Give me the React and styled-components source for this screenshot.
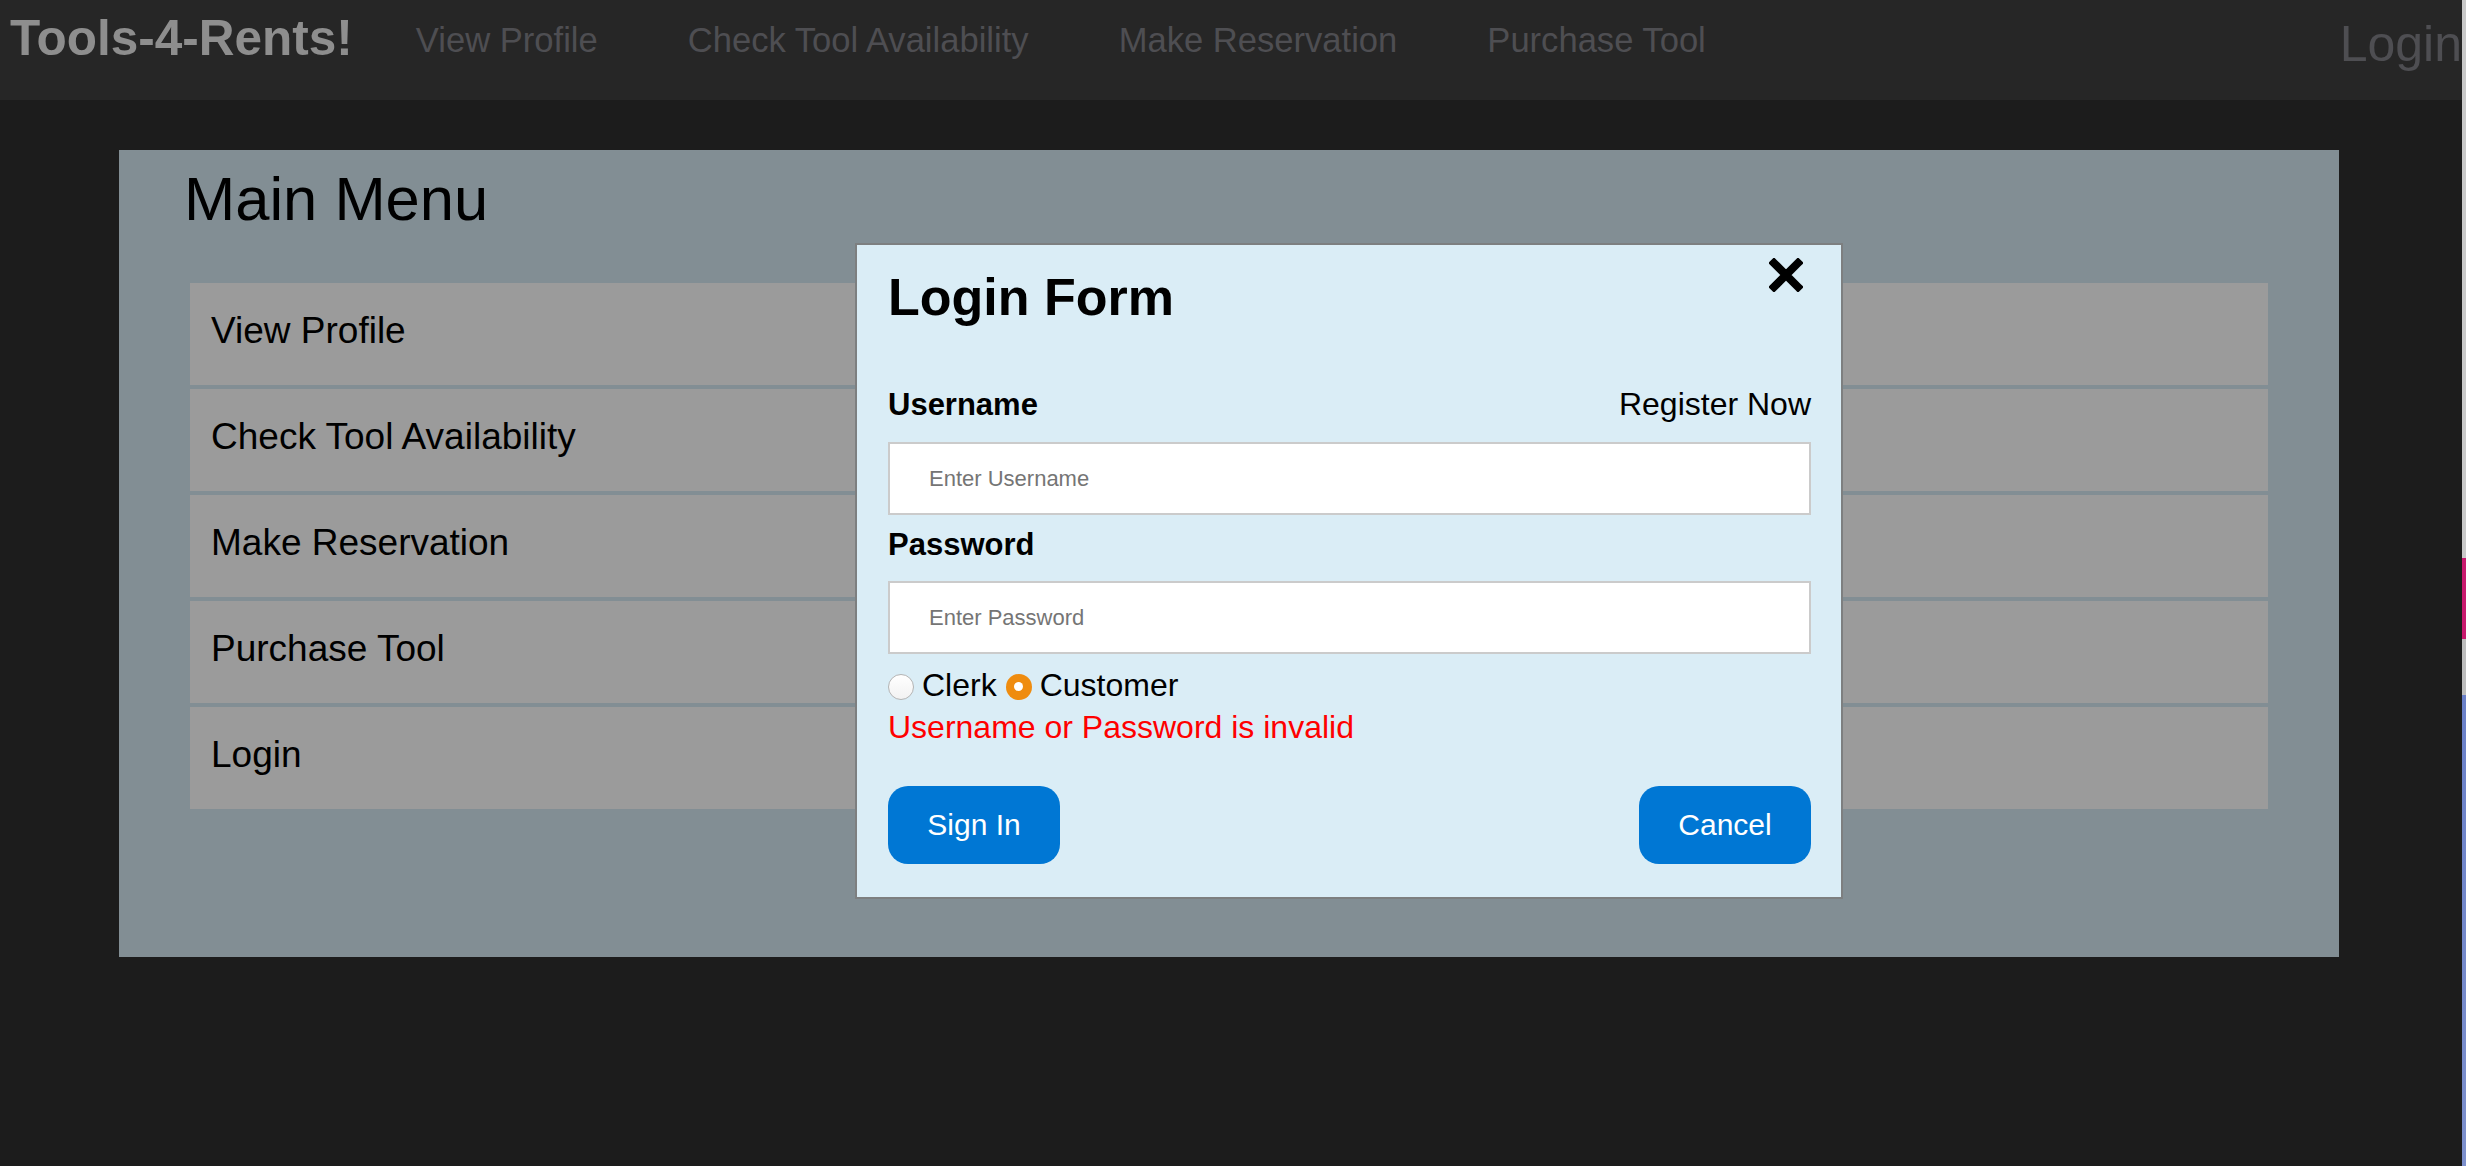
import React from 'react';
import styled, { createGlobalStyle } from 'styled-components';

const GlobalStyle = createGlobalStyle`
  html, body {
    margin: 0;
    padding: 0;
    background: #1c1c1c;
    font-family: "Liberation Sans", Helvetica, Arial, sans-serif;
    overflow: hidden;
  }
`;

const Shell = styled.div`
  display: flex;
  height: 1166px;
  overflow: hidden;
`;

const Page = styled.div`
  flex: 1;
  position: relative;
  min-width: 0;
`;

const EdgeStrip = styled.div`
  width: 4px;
  flex-shrink: 0;
  background: linear-gradient(
    to bottom,
    #c9c9c9 0px,
    #c9c9c9 558px,
    #c8196e 558px,
    #c8196e 639px,
    #bdbdbd 639px,
    #bdbdbd 695px,
    #6a80c8 695px,
    #7d90cc 100%
  );
`;

const NavBar = styled.nav`
  height: 100px;
  background: #262626;
  display: flex;
  align-items: flex-start;
  padding-left: 10px;
  box-sizing: border-box;
`;

const Brand = styled.div`
  margin-top: 10px;
  font-size: 49.5px;
  line-height: 56px;
  font-weight: bold;
  color: #8e8e8e;
  white-space: nowrap;
`;

const NavLinks = styled.div`
  display: flex;
  gap: 90px;
  margin-left: 63px;
`;

const NavLink = styled.a`
  margin-top: 20px;
  font-size: 34.6px;
  line-height: 40px;
  color: #4e4e52;
  text-decoration: none;
  white-space: nowrap;
`;

const LoginLink = styled.a`
  margin-left: auto;
  margin-top: 15px;
  font-size: 50px;
  line-height: 58px;
  color: #4e4e52;
  text-decoration: none;
  white-space: nowrap;
`;

const Panel = styled.section`
  width: 2220px;
  margin: 50px 0 0 119px;
  background: #828e94;
  padding: 14px 71px 148px;
  box-sizing: border-box;
`;

const PanelTitle = styled.h1`
  margin: 0 0 49px -6px;
  font-size: 61.5px;
  line-height: 70px;
  font-weight: normal;
  color: #000;
`;

const MenuList = styled.div`
  display: flex;
  flex-direction: column;
  gap: 4px;
`;

const MenuRow = styled.div`
  height: 102px;
  box-sizing: border-box;
  background: #9b9b9b;
  padding: 28px 0 0 21px;
  font-size: 37px;
  line-height: 40px;
  color: #000;
`;

const Modal = styled.div`
  position: absolute;
  left: 855px;
  top: 243px;
  width: 988px;
  box-sizing: border-box;
  background: #daedf6;
  border: 2px solid #7d7f80;
  padding: 22px 30px 33px 31px;
`;

const CloseButton = styled.button`
  position: absolute;
  top: 13px;
  right: 38px;
  width: 34px;
  height: 34px;
  padding: 0;
  border: none;
  background: transparent;
  display: flex;
  align-items: center;
  justify-content: center;
`;

const ModalTitle = styled.h2`
  margin: 0 0 58px;
  font-size: 52px;
  line-height: 60px;
  font-weight: bold;
  color: #000;
`;

const LabelRow = styled.div`
  display: flex;
  justify-content: space-between;
  align-items: baseline;
  margin-top: ${(p) => p.$top || 0}px;
  margin-bottom: ${(p) => p.$bottom || 0}px;
`;

const Label = styled.label`
  font-size: 31px;
  line-height: 38px;
  font-weight: bold;
  color: #000;
`;

const RegisterLink = styled.a`
  font-size: 32px;
  line-height: 38px;
  color: #000;
  text-decoration: none;
`;

const TextInput = styled.input`
  display: block;
  width: 100%;
  height: 73px;
  box-sizing: border-box;
  border: 2px solid #cbcbcb;
  background: #fff;
  padding: 0 0 0 39px;
  font-family: "Liberation Sans", Helvetica, Arial, sans-serif;
  font-size: 22px;
  color: #000;
  outline: none;
  &::placeholder {
    color: #757575;
  }
`;

const RadioRow = styled.div`
  display: flex;
  align-items: center;
  margin-top: 12px;
  font-size: 32px;
  line-height: 38px;
  color: #000;
`;

const RadioDot = styled.span`
  width: 26px;
  height: 26px;
  border-radius: 50%;
  box-sizing: border-box;
  margin: 3px 8px 0 ${(p) => p.$gap || 0}px;
  flex-shrink: 0;
  display: flex;
  align-items: center;
  justify-content: center;
  background: ${(p) => (p.$checked ? '#ef8c0f' : 'linear-gradient(#ffffff, #f2f2f2)')};
  border: ${(p) => (p.$checked ? 'none' : '1.5px solid #b4b4b4')};
  &::after {
    content: '';
    display: ${(p) => (p.$checked ? 'block' : 'none')};
    width: 9px;
    height: 9px;
    border-radius: 50%;
    background: #fff;
  }
`;

const ErrorText = styled.div`
  margin-top: 4px;
  font-size: 32px;
  line-height: 38px;
  color: #ff0000;
`;

const ButtonRow = styled.div`
  display: flex;
  justify-content: space-between;
  margin-top: 40px;
`;

const Button = styled.button`
  width: 172px;
  height: 78px;
  border: none;
  border-radius: 20px;
  background: #0077d4;
  color: #fff;
  font-family: "Liberation Sans", Helvetica, Arial, sans-serif;
  font-size: 30px;
  padding: 0;
`;

const menuItems = [
  'View Profile',
  'Check Tool Availability',
  'Make Reservation',
  'Purchase Tool',
  'Login',
];

const CloseIcon = () => (
  <svg width="34" height="34" viewBox="0 0 34 34">
    <path d="M5 5 L29 29 M29 5 L5 29" stroke="#000" strokeWidth="8" strokeLinecap="square" />
  </svg>
);

export default function App() {
  return (
    <>
      <GlobalStyle />
      <Shell>
        <Page>
          <NavBar>
            <Brand>Tools-4-Rents!</Brand>
            <NavLinks>
              {menuItems.slice(0, 4).map((it) => (
                <NavLink key={it} href="#">{it}</NavLink>
              ))}
            </NavLinks>
            <LoginLink href="#">Login</LoginLink>
          </NavBar>

          <Panel>
            <PanelTitle>Main Menu</PanelTitle>
            <MenuList>
              {menuItems.map((it) => (
                <MenuRow key={it}>{it}</MenuRow>
              ))}
            </MenuList>
          </Panel>

          <Modal>
            <CloseButton aria-label="close">
              <CloseIcon />
            </CloseButton>
            <ModalTitle>Login Form</ModalTitle>
            <LabelRow $bottom={18}>
              <Label>Username</Label>
              <RegisterLink href="#">Register Now</RegisterLink>
            </LabelRow>
            <TextInput placeholder="Enter Username" />
            <LabelRow $top={11} $bottom={17}>
              <Label>Password</Label>
            </LabelRow>
            <TextInput type="password" placeholder="Enter Password" />
            <RadioRow>
              <RadioDot />
              <span>Clerk</span>
              <RadioDot $checked $gap={9} />
              <span>Customer</span>
            </RadioRow>
            <ErrorText>Username or Password is invalid</ErrorText>
            <ButtonRow>
              <Button>Sign In</Button>
              <Button>Cancel</Button>
            </ButtonRow>
          </Modal>
        </Page>
        <EdgeStrip />
      </Shell>
    </>
  );
}
